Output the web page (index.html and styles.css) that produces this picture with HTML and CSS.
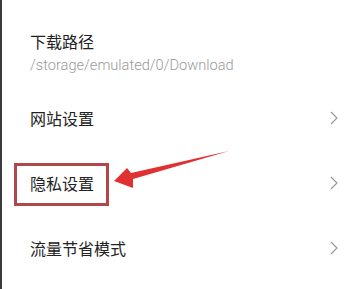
FILE: index.html
```html
<!DOCTYPE html>
<html lang="zh-CN">
<head>
<meta charset="utf-8">
<link rel="stylesheet" href="styles.css">
</head>
<body>
<div class="screen">
  <div class="item item-download">
    <div class="title">下载路径</div>
    <div class="sub">/storage/emulated/0/Download</div>
  </div>
  <div class="item row">
    <div class="title">网站设置</div>
    <svg class="chev" width="8" height="14" viewBox="0 0 8 14"><path d="M1 1 L7 7 L1 13" fill="none" stroke="#9a9a9a" stroke-width="1.2"/></svg>
  </div>
  <div class="item row">
    <div class="title">隐私设置</div>
    <svg class="chev" width="8" height="14" viewBox="0 0 8 14"><path d="M1 1 L7 7 L1 13" fill="none" stroke="#9a9a9a" stroke-width="1.2"/></svg>
  </div>
  <div class="item row">
    <div class="title">流量节省模式</div>
    <svg class="chev" width="8" height="14" viewBox="0 0 8 14"><path d="M1 1 L7 7 L1 13" fill="none" stroke="#9a9a9a" stroke-width="1.2"/></svg>
  </div>
  <div class="highlight"></div>
  <svg class="arrow" width="356" height="289" viewBox="0 0 356 289">
    <polygon points="114,181 127,168 131,173 229,151 133,179 133,188" fill="#e0302f"/>
  </svg>
</div>
</body>
</html>
```
FILE: styles.css
```css
html, body {
  margin: 0;
  padding: 0;
  background: #ffffff;
}
.screen {
  position: relative;
  width: 354px;
  height: 289px;
  border-left: 2px solid #3a3a3a;
  background: #ffffff;
  font-family: "Noto Sans CJK SC", "Noto Sans", sans-serif;
  color: #222222;
  overflow: hidden;
}
.item {
  padding-left: 28px;
  padding-right: 16px;
}
.item-download {
  height: 85px;
  box-sizing: border-box;
  padding-top: 31px;
}
.title {
  font-size: 16px;
  line-height: 20px;
}
.sub {
  margin-top: 5px;
  font-family: "Roboto", "Noto Sans", sans-serif;
  font-size: 14.6px;
  line-height: 18px;
  color: #9a9a9a;
  font-weight: 300;
}
.row {
  height: 65px;
  display: flex;
  align-items: center;
  justify-content: space-between;
}
.chev {
  display: block;
  margin-right: 2px;
}
.highlight {
  position: absolute;
  left: 12px;
  top: 163px;
  width: 89px;
  height: 37px;
  border: 3px solid #b0474b;
}
.arrow {
  position: absolute;
  left: -2px;
  top: 0;
}
```
